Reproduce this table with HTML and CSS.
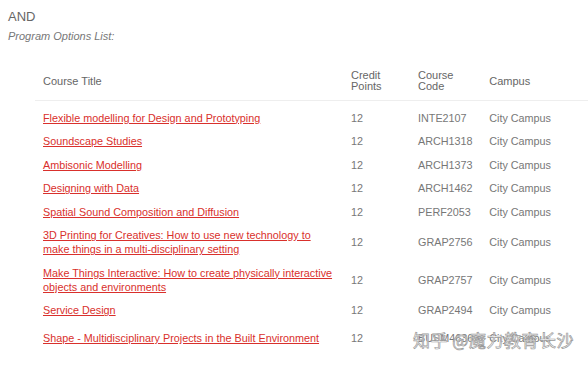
FILE: index.html
```html
<!DOCTYPE html>
<html>
<head>
<meta charset="utf-8">
<link rel="stylesheet" href="styles.css">
</head>
<body>
<div class="page">
  <div class="and">AND</div>
  <div class="subtitle">Program Options List:</div>
  <table class="courses">
    <thead>
      <tr>
        <th class="c-title">Course Title</th>
        <th class="c-credit">Credit<br>Points</th>
        <th class="c-code">Course<br>Code</th>
        <th class="c-campus">Campus</th>
      </tr>
    </thead>
    <tbody>
      <tr class="first"><td><a href="#">Flexible modelling for Design and Prototyping</a></td><td>12</td><td>INTE2107</td><td>City Campus</td></tr>
      <tr><td><a href="#">Soundscape Studies</a></td><td>12</td><td>ARCH1318</td><td>City Campus</td></tr>
      <tr><td><a href="#">Ambisonic Modelling</a></td><td>12</td><td>ARCH1373</td><td>City Campus</td></tr>
      <tr><td><a href="#">Designing with Data</a></td><td>12</td><td>ARCH1462</td><td>City Campus</td></tr>
      <tr><td><a href="#">Spatial Sound Composition and Diffusion</a></td><td>12</td><td>PERF2053</td><td>City Campus</td></tr>
      <tr><td><a href="#">3D Printing for Creatives: How to use new technology to make things in a multi-disciplinary setting</a></td><td>12</td><td>GRAP2756</td><td>City Campus</td></tr>
      <tr><td><a href="#">Make Things Interactive: How to create physically interactive objects and environments</a></td><td>12</td><td>GRAP2757</td><td>City Campus</td></tr>
      <tr><td><a href="#">Service Design</a></td><td>12</td><td>GRAP2494</td><td>City Campus</td></tr>
      <tr class="last"><td><a href="#">Shape - Multidisciplinary Projects in the Built Environment</a></td><td>12</td><td>BUSM4636</td><td>City Campus</td></tr>
    </tbody>
  </table>
</div>
<div class="watermark">知乎 @魔力教育长沙</div>
</body>
</html>
```
FILE: styles.css
```css
html, body {
  margin: 0;
  padding: 0;
  background: #ffffff;
}
body {
  font-family: "Liberation Sans", Arial, sans-serif;
  color: #777;
  position: relative;
  width: 588px;
  height: 369px;
  overflow: hidden;
}
.page {
  padding: 9px 0 0 8px;
}
.and {
  font-size: 13px;
  line-height: 16px;
  color: #666;
}
.subtitle {
  font-size: 11px;
  line-height: 14px;
  font-style: italic;
  color: #777;
  margin-top: 4px;
}
.courses {
  margin-top: 19px;
  margin-left: 27px;
  border-collapse: collapse;
  width: 560px;
  font-size: 10.8px;
}
.courses th {
  font-weight: normal;
  text-align: left;
  color: #666;
  font-size: 11px;
  line-height: 11px;
  padding: 8px;
  vertical-align: middle;
  border-bottom: 1px solid #eeeeee;
}
.courses td {
  line-height: 14px;
  padding: 4.75px 8px;
  vertical-align: middle;
  color: #777;
}
.courses .c-title { width: 292px; }
.courses .c-credit { width: 51px; }
.courses .c-code { width: 52px; }
.courses a {
  color: #d9302c;
  text-decoration: underline;
}
.courses tr.first td {
  padding-top: 9.75px;
}
.courses tr.last td {
  padding-top: 9px;
}
.watermark {
  position: absolute;
  left: 413px;
  top: 329px;
  font-family: "Noto Sans CJK SC", sans-serif;
  font-size: 17px;
  letter-spacing: 0.5px;
  color: rgba(255,255,255,0.85);
  -webkit-text-stroke: 0.7px #9a9a9a;
  line-height: 22px;
}
```
